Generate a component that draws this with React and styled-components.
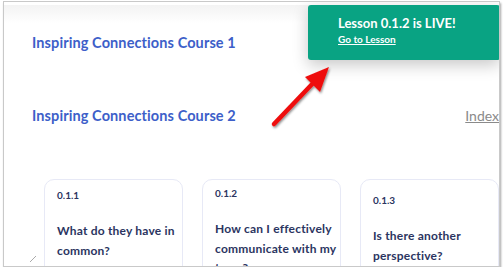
import React from "react";
import styled, { createGlobalStyle } from "styled-components";

const Global = createGlobalStyle`
  html, body {
    margin: 0;
    padding: 0;
    background: #ffffff;
    font-family: "Lato", "Open Sans", sans-serif;
  }
`;

const Frame = styled.div`
  position: relative;
  box-sizing: border-box;
  margin: 1px 0 0 3px;
  width: 497px;
  height: 266px;
  border: 1px solid #c9c9c9;
  box-shadow: 1px 2px 2px rgba(0, 0, 0, 0.35);
  overflow: hidden;
  background: #fff;
`;

const TopShade = styled.div`
  height: 18px;
  margin-top: 3px;
  background: linear-gradient(to bottom, #f3f3f3, #fbfbfb 70%, #fff);
`;

const Content = styled.div`
  padding: 0 0 0 28px;
`;

const CourseRow = styled.div`
  display: flex;
  justify-content: space-between;
  align-items: baseline;
  margin-top: ${(p) => p.top}px;
`;

const CourseTitle = styled.a`
  color: #3d5fc9;
  font-weight: 700;
  font-size: 14.5px;
  letter-spacing: 0.1px;
  text-decoration: none;
`;

const IndexLink = styled.a`
  color: #8a8a8a;
  font-size: 14px;
  text-decoration: underline;
  margin-right: 0;
`;

const Cards = styled.div`
  display: flex;
  gap: 19px;
  margin: 55px 0 0 12px;
`;

const Card = styled.div`
  box-sizing: border-box;
  flex: 0 0 139px;
  height: 120px;
  border: 1px solid #e7e9f6;
  border-radius: 10px;
  padding: ${(p) => p.top}px 2px 0 12px;
  color: #2b3561;
`;

const Code = styled.div`
  font-size: 10px;
  font-weight: 700;
  line-height: 14px;
`;

const Question = styled.div`
  margin-top: 19px;
  font-size: 12px;
  font-weight: 700;
  line-height: 19.5px;
  letter-spacing: 0.2px;
`;

const Toast = styled.div`
  position: absolute;
  top: 3px;
  left: 304px;
  width: 192px;
  height: 55px;
  box-sizing: border-box;
  padding: 10px 0 0 30px;
  background: #09a383;
  border-radius: 3px;
  color: #fff;
  box-shadow: 0 5px 16px rgba(0, 0, 0, 0.22);
`;

const ToastTitle = styled.div`
  font-size: 13px;
  font-weight: 700;
  line-height: 17px;
`;

const ToastLink = styled.a`
  display: block;
  margin-top: 1px;
  font-size: 10px;
  font-weight: 700;
  color: #fff;
  text-decoration: underline;
`;

const Arrow = styled.svg`
  position: absolute;
  left: 260px;
  top: 58px;
  overflow: visible;
`;

const Grip = styled.svg`
  position: absolute;
  left: 25px;
  bottom: 3px;
`;

const cards = [
  { code: "0.1.1", q: "What do they have in common?", top: 8 },
  { code: "0.1.2", q: "How can I effectively communicate with my team?", top: 6 },
  { code: "0.1.3", q: "Is there another perspective?", top: 13 },
];

export default function App() {
  return (
    <>
      <Global />
      <Frame>
        <TopShade />
        <Content>
          <CourseRow top={11}>
            <CourseTitle>Inspiring Connections Course 1</CourseTitle>
          </CourseRow>
          <CourseRow top={56}>
            <CourseTitle>Inspiring Connections Course 2</CourseTitle>
            <IndexLink>Index</IndexLink>
          </CourseRow>
          <Cards>
            {cards.map((c) => (
              <Card key={c.code} top={c.top}>
                <Code>{c.code}</Code>
                <Question>{c.q}</Question>
              </Card>
            ))}
          </Cards>
        </Content>
        <Toast>
          <ToastTitle>Lesson 0.1.2 is LIVE!</ToastTitle>
          <ToastLink>Go to Lesson</ToastLink>
        </Toast>
        <Arrow width="80" height="80" viewBox="0 0 80 80">
          <defs>
            <filter id="sh" x="-30%" y="-30%" width="160%" height="160%">
              <feDropShadow dx="1" dy="1.5" stdDeviation="1" floodColor="#000" floodOpacity="0.45" />
            </filter>
          </defs>
          <g filter="url(#sh)">
            <line x1="10" y1="64" x2="52" y2="20" stroke="#ee1111" strokeWidth="4.5" strokeLinecap="round" />
            <polygon points="65,7 41,17 56,32" fill="#ee1111" />
          </g>
        </Arrow>
        <Grip width="8" height="8" viewBox="0 0 8 8">
          <line x1="1" y1="7" x2="7" y2="1" stroke="#aaa" strokeWidth="1" />
        </Grip>
      </Frame>
    </>
  );
}
